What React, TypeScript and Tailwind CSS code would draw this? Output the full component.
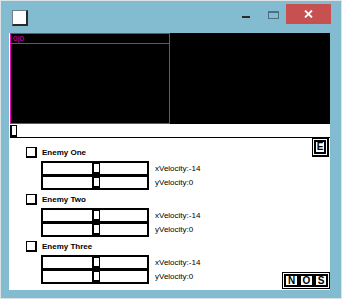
import React from "react";

const font = "font-['Liberation_Sans',Arial,sans-serif]";

function Check() {
  return <div className="w-[11px] h-[11px] bg-white border border-black border-b-2 border-r-2" />;
}

function Bar() {
  return (
    <div className="w-[108px] h-[15px] border-2 border-black bg-white flex items-center">
      <div className="ml-[49px] w-[8px] h-[11px] bg-white border border-black border-l-2 border-b-2" />
    </div>
  );
}

function Enemy({ name }: { name: string }) {
  return (
    <div className="flex flex-col">
      <div className="flex h-[14px] items-start">
        <Check />
        <span className={`ml-[5px] text-[8px] leading-[11px] font-bold text-black ${font}`}>{name}</span>
      </div>
      <div className="flex items-stretch ml-[15px]">
        <div className="flex flex-col">
          <Bar />
          <div className="-mt-[1px]">
            <Bar />
          </div>
        </div>
        <div className={`flex flex-col ml-[6px] text-[8px] text-black ${font}`}>
          <div className="h-[15px] flex items-center">xVelocity:-14</div>
          <div className="h-[14px] flex items-center">yVelocity:0</div>
        </div>
      </div>
    </div>
  );
}

function Letter({ ch, w }: { ch: string; w: string }) {
  return (
    <div className={`${w} h-[13px] border-2 border-black bg-white flex items-center justify-center text-[10px] font-black leading-none text-black ${font}`}>
      {ch}
    </div>
  );
}

export default function App() {
  return (
    <div className="w-[342px] h-[299px] bg-[#83bbd0] border border-[#dce3e6] flex flex-col overflow-hidden">
      {/* title bar */}
      <div className="h-[32px] flex items-start relative">
        <div className="ml-[11px] mt-[9px] w-[16px] h-[16px] bg-white border border-[#6f7f87] border-b-2 border-r-2 border-b-[#2a2a2a] border-r-[#2a2a2a]" />
        <div className="flex-1" />
        <div className="mt-[15px] w-[8px] h-[2px] bg-[#2b2b2b]" />
        <div className="ml-[18px] mt-[10px] w-[11px] h-[8px] border border-t-2 border-[#4d6f80]" />
        <div className="ml-[7px] mt-[3px] w-[45px] h-[20px] bg-[#c75050] flex items-center justify-center">
          <svg width="9" height="8" viewBox="0 0 9 8">
            <path d="M1 0.5 L8 7.5 M8 0.5 L1 7.5" stroke="white" strokeWidth="1.8" />
          </svg>
        </div>
        <div className="w-[10px]" />
      </div>
      {/* body */}
      <div className="flex-1 flex pl-[8px] pr-[11px] pb-[8px]">
        <div className="flex-1 bg-white flex flex-col pl-[1px]">
          {/* canvas */}
          <div className="h-[91px] bg-black flex">
            <div className="w-[160px] h-[91px] border border-[#f000c0] flex flex-col">
              <div className={`h-[10px] border-b border-[#f000c0] text-[#f000c0] text-[8px] leading-[10px] pl-[2px] ${font}`}>0|0</div>
            </div>
          </div>
          {/* scroll strip */}
          <div className="h-[13px] flex items-start">
            <div className="mt-[1px] w-[7px] h-[12px] bg-white border border-black border-l-2 border-b-2" />
          </div>
          <div className="h-[1px] bg-black" />
          {/* panel */}
          <div className="flex-1 flex justify-between">
            <div className="pl-[16px] pt-[9px] flex flex-col gap-[4px]">
              <Enemy name="Enemy One" />
              <Enemy name="Enemy Two" />
              <Enemy name="Enemy Three" />
            </div>
            <div className="flex flex-col items-end justify-between pb-[1px]">
              <div className="mr-[1px] border border-black border-b-2 border-r-2 p-px bg-white">
                <div className={`w-[12px] h-[14px] border-2 border-black flex items-center justify-center text-[10px] font-black leading-none text-black ${font}`}>E</div>
              </div>
              <div className="border border-black p-px bg-white flex">
                <Letter ch="N" w="w-[15px]" />
                <Letter ch="O" w="w-[15px]" />
                <Letter ch="S" w="w-[14px]" />
              </div>
            </div>
          </div>
        </div>
      </div>
    </div>
  );
}
